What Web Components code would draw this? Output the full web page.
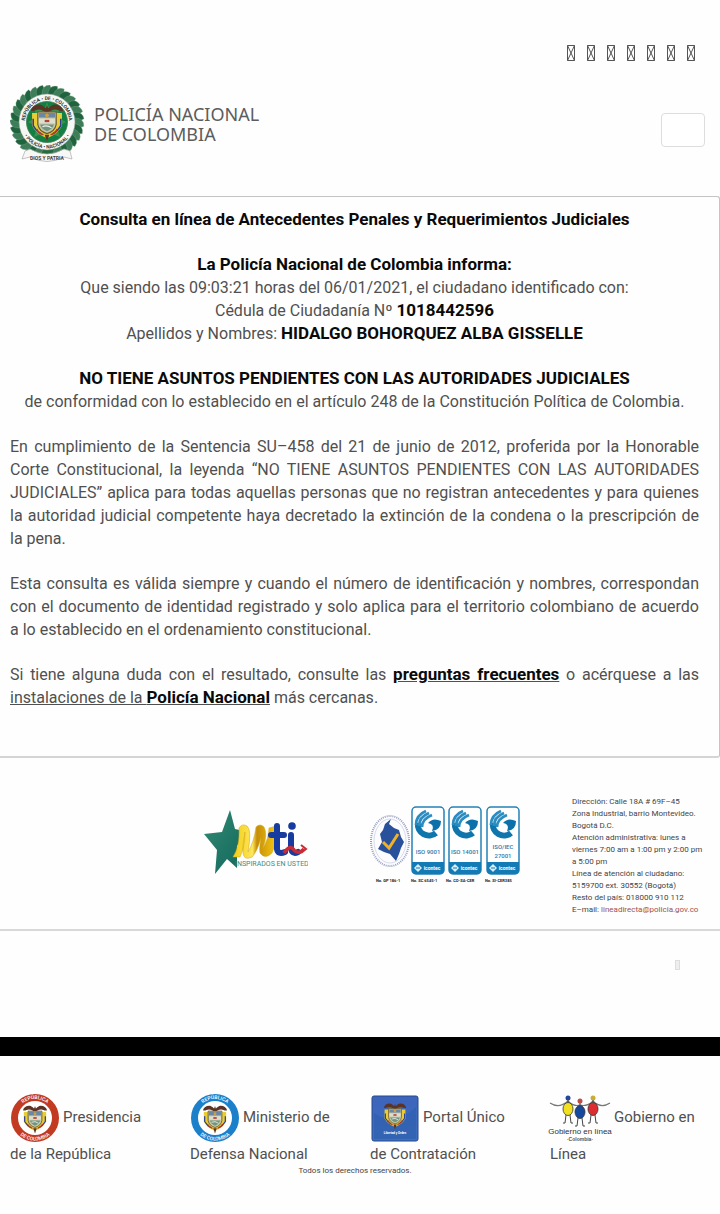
<!DOCTYPE html>
<html lang="es">
<head>
<meta charset="utf-8">
<meta name="viewport" content="width=device-width, initial-scale=1">
<title>Consulta de Antecedentes - Policía Nacional de Colombia</title>
<style>
body { margin: 0; background: #fefefe; color: #505050; font: 400 16px/23px Roboto, sans-serif; }
strong { font-size: 17px; line-height: 16px; font-weight: 700; color: #0a0a0a; }
p { margin: 0; }
a { color: inherit; }
</style>
</head>
<body>
<site-header></site-header>
<main>
<result-card>
  <h1 slot="title">Consulta en línea de Antecedentes Penales y Requerimientos Judiciales</h1>
  <p class="center"><strong>La Policía Nacional de Colombia informa:</strong><br>Que siendo las 09:03:21 horas del 06/01/2021, el ciudadano identificado con:<br>Cédula de Ciudadanía Nº <strong>1018442596</strong><br>Apellidos y Nombres: <strong>HIDALGO BOHORQUEZ ALBA GISSELLE</strong></p>
  <p class="center"><strong>NO TIENE ASUNTOS PENDIENTES CON LAS AUTORIDADES JUDICIALES</strong><br>de conformidad con lo establecido en el artículo 248 de la Constitución Política de Colombia.</p>
  <p>En cumplimiento de la Sentencia SU–458 del 21 de junio de 2012, proferida por la Honorable Corte Constitucional, la leyenda “NO TIENE ASUNTOS PENDIENTES CON LAS AUTORIDADES JUDICIALES” aplica para todas aquellas personas que no registran antecedentes y para quienes la&nbsp;autoridad judicial competente haya decretado la extinción de la condena o la prescripción de la&nbsp;pena.</p>
  <p>Esta consulta es válida siempre y cuando el número de identificación y nombres, correspondan con el documento de identidad registrado y solo aplica para el territorio colombiano de acuerdo a&nbsp;lo establecido en el ordenamiento constitucional.</p>
  <p>Si tiene alguna duda con el resultado, consulte las <a href="#preguntas"><strong>preguntas frecuentes</strong></a> o acérquese a las <a href="#instalaciones">instalaciones de la <strong>Policía Nacional</strong></a> más cercanas.</p>
</result-card>
</main>
<contact-strip></contact-strip>
<site-footer>
  <gov-link href="#presidencia" icon="presidencia">Presidencia de la República</gov-link>
  <gov-link href="#defensa" icon="defensa">Ministerio de Defensa Nacional</gov-link>
  <gov-link href="#contratacion" icon="portal">Portal Único de Contratación</gov-link>
  <gov-link href="#gobierno" icon="gobierno">Gobierno en Línea</gov-link>
  <small slot="legal">Todos los derechos reservados.</small>
</site-footer>

<script>
const define = (name, html, setup) => customElements.define(name, class extends HTMLElement {
  constructor() {
    super();
    this.attachShadow({ mode: 'open' }).innerHTML = html;
  }
  connectedCallback() { if (setup) setup(this, this.shadowRoot); }
});

/* Coat of arms, centred on 0,0 and about 30 units wide */
const arms = `
  <path d="M-13 -7 L-13 4 Q-10 11 0 15 Q10 11 13 4 L13 -7 Z" fill="#e9cd35"/>
  <path d="M-12 -2 L-12 4 Q-9 9 -5 11 M12 -2 L12 4 Q9 9 5 11" fill="none" stroke="#2d3f93" stroke-width="1.4"/>
  <path d="M-9 7 Q-7 11 -3 12 M9 7 Q7 11 3 12" fill="none" stroke="#b5372a" stroke-width="1.4"/>
  <path d="M-8 -8 H8 V3 Q7 9 0 11 Q-7 9 -8 3 Z" fill="#c4c9a4" stroke="#6b5a2b" stroke-width="1"/>
  <path d="M-7 -7 H7 V-3 H-7 Z" fill="#6a87a7"/>
  <path d="M-7 -2 H7 V2 H-7 Z" fill="#dfdcd0"/>
  <path d="M-2 -1 L2 -1 L2 1 L-2 1 Z" fill="#b84232"/>
  <path d="M-6 3 H6 Q5 7 0 9 Q-5 7 -6 3 Z" fill="#709583"/>
  <path d="M-4 5 Q0 3 4 6" fill="none" stroke="#eee" stroke-width="1"/>
  <circle cx="0" cy="-5" r="1.6" fill="#d6a033"/>
  <path d="M0 -8 C-3 -8 -4 -10 -7 -10 C-10 -10 -11 -8 -14 -9 C-13 -13 -9 -15 -5 -14 C-3 -13 -2 -12 -1 -11 L0 -14 L1 -11 C2 -12 3 -13 5 -14 C9 -15 13 -13 14 -9 C11 -8 10 -10 7 -10 C4 -10 3 -8 0 -8 Z" fill="#5c3425"/>
  <path d="M-2 12 L0 18 L2 12 Z" fill="#5c3425"/>`;

const sealBadge = (color, id) => `
<svg width="50" height="50" viewBox="0 0 50 50" aria-hidden="true">
  <defs><path id="${id}t" d="M6 25 A19 19 0 0 1 44 25"/><path id="${id}b" d="M2.500 25 A22.500 22.500 0 0 0 47.500 25"/></defs>
  <circle cx="25" cy="25" r="24" fill="${color}"/>
  <circle cx="25" cy="25" r="17" fill="#fff"/>
  <g transform="translate(25 25) scale(.86)">${arms}</g>
  <g font-family="Roboto, sans-serif" font-size="5" font-weight="500" fill="#fff" text-anchor="middle">
    <text><textPath href="#${id}t" startOffset="50%">REPÚBLICA</textPath></text>
    <text><textPath href="#${id}b" startOffset="50%">DE COLOMBIA</textPath></text>
  </g>
</svg>`;

const policeShield = () => {
  let leaves = '';
  for (let i = -14; i <= 14; i++) {
    leaves += `<path transform="rotate(${i * 11.5} 37 37) translate(37 3)" d="M-5 6 Q-5 -3 3 -3 Q6 3 0 8 Z" fill="${i % 2 ? '#20643f' : '#3d7d58'}" stroke="#8fb39b" stroke-width=".3"/>`;
  }
  return `
<svg width="76" height="78" viewBox="0 0 76 78" aria-hidden="true">
  <defs><path id="pt" d="M16.300 44.500 A22 22 0 1 1 57.700 44.500"/><path id="pb" d="M10.500 37 A26.500 26.500 0 0 0 63.500 37"/></defs>
  <circle cx="37" cy="37" r="30" fill="none" stroke="#28693f" stroke-width="8"/>
  ${leaves}
  <circle cx="37" cy="37" r="28" fill="#f6f7f4" stroke="#8a9d8e" stroke-width=".5"/>
  <circle cx="37" cy="37" r="20.500" fill="#128043" stroke="#3c7853" stroke-width=".8"/>
  <path d="M37 17 L40 26 L50 22 L47 32 L56 37 L47 42 L50 52 L40 48 L37 57 L34 48 L24 52 L27 42 L18 37 L27 32 L24 22 L34 26 Z" fill="#3f904f"/>
  <g transform="translate(37 36) scale(1.150)">${arms}</g>
  <g font-family="Roboto, sans-serif" font-size="5" font-weight="700" fill="#333" text-anchor="middle">
    <text><textPath href="#pt" startOffset="50%">REPÚBLICA • DE • COLOMBIA</textPath></text>
    <text><textPath href="#pb" startOffset="50%">• POLICÍA • NACIONAL •</textPath></text>
  </g>
  <path d="M15 66 L20 64 Q37 74 54 64 L60 66 L62 74 L54 72 Q37 81 20 72 L12 74 Z" fill="#f7f7f5" stroke="#aaa" stroke-width=".7"/>
  <text x="37" y="75" font-family="Roboto, sans-serif" font-size="5" font-weight="700" fill="#444" text-anchor="middle">DIOS Y PATRIA</text>
</svg>`;
};

const missingGlyph = `<svg width="8" height="16" viewBox="0 0 8 16" aria-hidden="true"><path d="M.5 .5 H7.500 V15.500 H.5 Z M.5 .5 L7.500 15.500 M7.500 .5 L.5 15.500" fill="none" stroke="#555"/></svg>`;

define('site-header', `
<style>
  :host { display: block; padding: 45px 15px 33px 10px; }
  nav { display: flex; justify-content: flex-end; gap: 12px; padding-right: 10px; }
  nav a { display: block; height: 16px; }
  svg { display: block; }
  .bar { display: flex; justify-content: space-between; align-items: center; padding-top: 24px; }
  .brand { display: flex; align-items: center; gap: 8px; color: #5c5c5c; text-decoration: none; font: 400 18px/20px "Noto Sans", sans-serif; }
  button { width: 44px; height: 34px; margin-top: 12px; border: 1px solid #ddd; border-radius: 4px; background: #fff; padding: 0; }
</style>
<nav aria-label="Accesos">${['Inicio', 'Facebook', 'Twitter', 'YouTube', 'Instagram', 'Contacto', 'Buscar'].map(n => `<a href="#${n.toLowerCase()}" aria-label="${n}">${missingGlyph}</a>`).join('')}</nav>
<div class="bar">
  <a class="brand" href="#inicio">${policeShield()}<span>POLICÍA NACIONAL<br>DE COLOMBIA</span></a>
  <button type="button" aria-label="Menú"></button>
</div>`);

define('result-card', `
<style>
  :host { display: block; border: 1px solid #c4c4c4; border-bottom: 2px solid #d4d4d4; border-left: 0; border-radius: 0 3px 3px 0; padding: 11px 20px 47px 10px; }
  article { display: flex; flex-direction: column; gap: 22px; text-align: justify; }
  ::slotted(h1) { margin: 0; font-size: 17px; line-height: 23px; font-weight: 700; color: #0a0a0a; text-align: center; }
  ::slotted(p.center) { text-align: center; }
</style>
<article><slot name="title"></slot><slot></slot></article>`);

const isoBadge = (x, l1, l2) => `
  <g transform="translate(${x} 0)">
    <rect x="1" y="1" width="32" height="67" rx="4" fill="#fff" stroke="#2481b8" stroke-width="1.5"/>
    <path d="M1 56 H33 V64 Q33 68 29 68 H5 Q1 68 1 64 Z" fill="#127ab5"/>
    <path d="M25 27 A11 11 0 0 1 7 17" fill="none" stroke="#0f75ad" stroke-width="6"/>
    <path d="M30 15 Q22 11 17 17 Q24 18 21 25 Q30 24 30 15 Z" fill="#0c70aa"/>
    <path d="M5 19 Q5 9 15 5 M8 20 Q8 11 18 7 M11 21 Q11 13 21 9" fill="none" stroke="#2a8cc0" stroke-width="2.800"/>
    <g font-family="Roboto, sans-serif" text-anchor="middle">
      <text x="17" y="${l2 ? 43 : 48}" font-size="6" fill="#2c79aa" font-weight="500">${l1}</text>
      <text x="17" y="52" font-size="6" fill="#2c79aa" font-weight="500">${l2}</text>
      <text x="21" y="64" font-size="5" fill="#fff" font-weight="700">icontec</text>
    </g>
    <path d="M7 58 L11 62 L7 66 L3 62 Z" fill="#d8eef9"/><path d="M5 62 H9" stroke="#127ab5"/>
  </g>`;

define('contact-strip', `
<style>
  :host { display: block; }
  .row { display: grid; grid-template-columns: 194fr 166fr 202fr 148fr; padding: 38px 0 13px 10px; border-bottom: 2px solid #d8d8d8; }
  .mti, .iso { display: block; }
  .mti { grid-column: 2; margin-top: 12px; }
  .iso { grid-column: 3; margin-top: 10px; }
  address { grid-column: 4; font: 400 8px/12px Roboto, sans-serif; color: #444; white-space: nowrap; }
  address a { color: #a0524c; text-decoration: none; }
  .up { display: flex; justify-content: flex-end; padding: 29px 40px 67px 0; }
  .up a { display: block; width: 3px; height: 8px; border: 1px solid #ddd; background: #eee; }
  .band { height: 19px; background: #000; }
</style>
<div class="row">
  <svg class="mti" width="104" height="70" viewBox="0 0 104 70" role="img" aria-label="MTI">
    <defs><linearGradient id="gold" x2="1"><stop offset="0" stop-color="#f3ce16"/><stop offset=".45" stop-color="#fce65a"/><stop offset=".55" stop-color="#c58d08"/><stop offset="1" stop-color="#f5c914"/></linearGradient>
    <linearGradient id="teal" x2="1" y2="1"><stop offset="0" stop-color="#328a72"/><stop offset="1" stop-color="#10655b"/></linearGradient></defs>
    <path d="M26 2 L31 21 L44 24 L33 38 L33 60 L23 51 L11 66 L13 42 L0 26 L18 24 Z" fill="url(#teal)"/>
    <path d="M29 49 Q36 38 35 20 Q38 15 43 18 Q48 22 44 44 Q50 34 52 19 Q56 15 60 19 Q64 26 59 40 Q65 30 65 20 L72 18 Q74 32 68 45 Q61 52 56 45 Q55 40 57 30 Q53 44 48 49 Q40 53 39 45 Q38 36 41 24 Q41 38 36 49 Z" fill="url(#gold)" stroke="#d3a413" stroke-width=".5"/>
    <path d="M73 18 V41 Q74 47 81 44 M67 27 H80 M87 27 V40 Q88 47 94 44" fill="none" stroke="#173b9f" stroke-width="6" stroke-linecap="round"/>
    <circle cx="88" cy="18" r="3.800" fill="#173b9f"/>
    <path d="M80 45 Q86 36 90 42 Q94 47 100 41" fill="none" stroke="#c82c35" stroke-width="3.500"/><path d="M97 37 L102 41 L97 45" fill="none" stroke="#c82c35" stroke-width="2"/>
    <text x="31" y="58" font-family="Roboto, sans-serif" font-size="7" fill="#3b8d82">INSPIRADOS EN USTED</text>
  </svg>
  <svg class="iso" width="154" height="80" viewBox="0 0 154 80" role="img" aria-label="Certificaciones ISO">
    <ellipse cx="20" cy="35" rx="19" ry="25" fill="#fcfcff" stroke="#97a1c0" stroke-width="2" stroke-dasharray="1 1"/>
    <ellipse cx="20" cy="35" rx="16" ry="22" fill="none" stroke="#bdc5dc" stroke-width=".6"/>
    <path d="M21 13 L19 18 L24 22 L29 24 L31 31 L34 36 L31 42 L29 48 L26 55 L20 48 L14 46 L8 43 L12 36 L10 28 L13 24 L15 18 Z" fill="#28509b"/>
    <path d="M13 36 L19 42 L28 28" fill="none" stroke="#efb129" stroke-width="3"/>
    ${isoBadge(41, 'ISO 9001', '')}${isoBadge(78, 'ISO 14001', '')}${isoBadge(116, 'ISO/IEC', '27001')}
    <g font-family="Roboto, sans-serif" font-size="4" font-weight="700" fill="#222">
      <text x="6" y="76">No. GP 186-1</text><text x="41" y="76">No. SC 6545-1</text><text x="76" y="76">No. CO-SA-CER</text><text x="115" y="76">No. SI-CER385</text>
    </g>
  </svg>
  <address>Dirección: Calle 18A # 69F–45<br>Zona Industrial, barrio Montevideo.<br>Bogotá D.C.<br>Atención administrativa: lunes a<br>viernes 7:00 am a 1:00 pm y 2:00 pm<br>a 5:00 pm<br>Línea de atención al ciudadano:<br>5159700 ext. 30552 (Bogotá)<br>Resto del país: 018000 910 112<br>E–mail: <a href="mailto:lineadirecta@policia.gov.co">lineadirecta@policia.gov.co</a></address>
</div>
<div class="up"><a href="#inicio" aria-label="Subir"></a></div>
<div class="band"></div>`);

define('site-footer', `
<style>
  :host { display: block; padding: 37px 0 35px; text-align: center; }
  .links { display: grid; grid-template-columns: repeat(4, 1fr); text-align: left; }
  ::slotted(small) { display: block; padding-right: 10px; font-size: 8px; line-height: 10px; font-weight: 400; color: #444; }
</style>
<div class="links"><slot></slot></div>
<slot name="legal"></slot>`);

const person = (x, y, color, head) => `
  <circle cx="${x}" cy="${y}" r="2.500" fill="${head}"/>
  <ellipse cx="${x}" cy="${y + 11}" rx="5" ry="6.500" fill="${color}" stroke="#333" stroke-width=".8"/>
  <path d="M${x - 2} ${y + 17} L${x - 3} ${y + 25} L${x - 5} ${y + 25} M${x + 2} ${y + 17} L${x + 3} ${y + 25} L${x + 5} ${y + 25} M${x} ${y + 2} V${y + 5}" fill="none" stroke="#444"/>`;

const govIcons = {
  presidencia: sealBadge('#c23a22', 'p'),
  defensa: sealBadge('#1c7fca', 'd'),
  portal: `<svg width="50" height="50" viewBox="0 0 50 50" aria-hidden="true">
    <defs><linearGradient id="blue" x2="0" y2="1"><stop offset="0" stop-color="#3c64bb"/><stop offset="1" stop-color="#3d6fbe"/></linearGradient></defs>
    <rect x="2" y="3" width="46" height="45" rx="2" fill="url(#blue)" stroke="#28498c"/>
    <path d="M4 20 Q25 34 46 14 V46 H4 Z" fill="#2959a9" opacity=".5"/>
    <g transform="translate(25 22) scale(.8)">${arms}</g>
    <text x="25" y="41" font-family="Roboto, sans-serif" font-size="3" font-weight="700" fill="#fff" text-anchor="middle">Libertad y Orden</text></svg>`,
  gobierno: `<svg width="61" height="50" viewBox="0 0 61 50" aria-hidden="true">
    <path d="M0 10 Q9 16 18 8 Q24 14 30 12 Q37 14 43 8 Q51 16 60 10" fill="none" stroke="#777" stroke-width="1.200"/>
    ${person(18, 5, '#f1df20', '#254795')}${person(30, 8, '#16499d', '#bc4f45')}${person(43, 5, '#dc2d30', '#c8ac35')}
    <text x="30" y="41" font-family="'Liberation Sans Narrow', 'Liberation Sans', sans-serif" font-size="8" fill="#333" text-anchor="middle">Gobierno en línea</text>
    <text x="30" y="48" font-family="'Liberation Sans', sans-serif" font-size="5" font-weight="700" fill="#555" text-anchor="middle">·Colombia·</text></svg>`
};

define('gov-link', `
<style>
  :host { display: block; padding: 0 20px 0 10px; font-size: 15px; line-height: 23px; }
  a { color: #505050; text-decoration: none; }
  .icon { display: inline-block; margin-right: 3px; vertical-align: middle; }
  svg { display: block; overflow: visible; }
</style>
<a><span class="icon"></span><slot></slot></a>`, (host, root) => {
  root.querySelector('a').href = host.getAttribute('href');
  root.querySelector('.icon').innerHTML = govIcons[host.getAttribute('icon')];
});
</script>
</body>
</html>
